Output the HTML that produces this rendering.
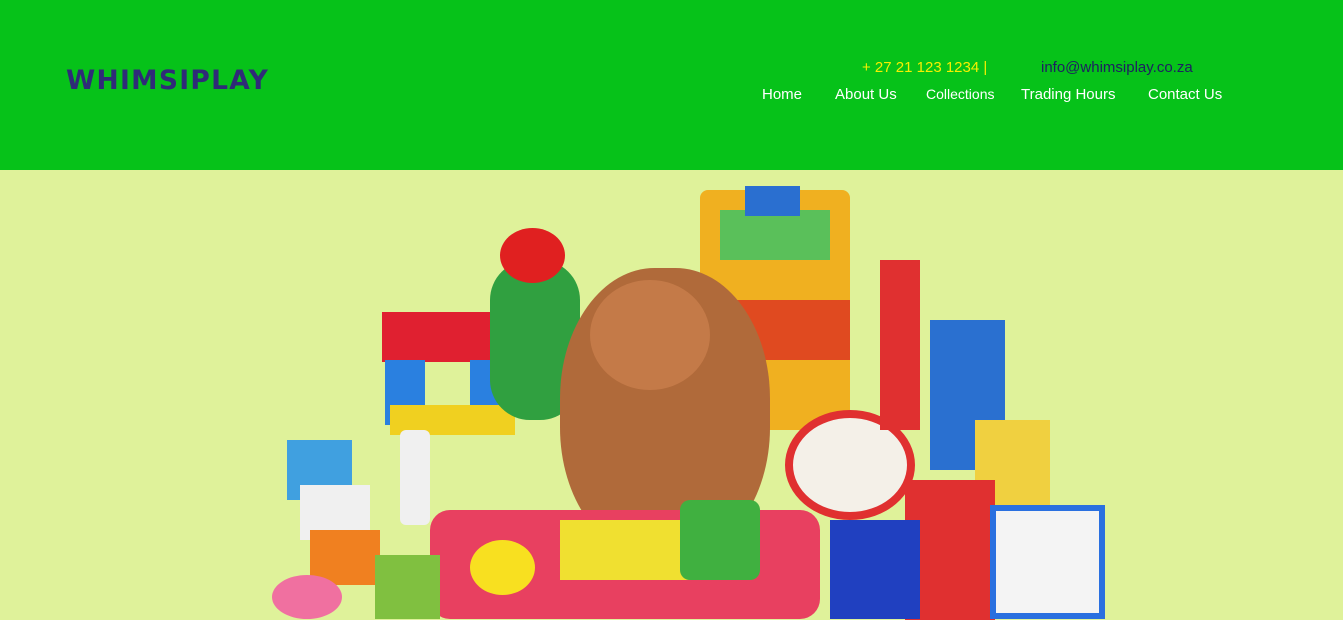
<!DOCTYPE html>
<html><head><style>
*{margin:0;padding:0;box-sizing:border-box}
body{width:1343px;height:619px;overflow:hidden;background:#dff29a;font-family:"Liberation Sans",sans-serif;position:relative}
header{position:absolute;left:0;top:0;width:1343px;height:170px;background:#06c219}
.logo{position:absolute;left:66px;top:65px;font-size:26.5px;font-weight:bold;color:#2f2b78;letter-spacing:1.3px;font-family:"DejaVu Sans",sans-serif}
.t{position:absolute;font-size:15px;white-space:nowrap}
.n{color:#fff;top:86px}
.b{position:absolute}
</style></head><body>
<header>
<div class="logo">WHIMSIPLAY</div>
<div class="t" style="left:862px;top:59px;color:#f6f000">+ 27 21 123 1234 |</div>
<div class="t" style="left:1041px;top:59px;color:#1d2160">info@whimsiplay.co.za</div>
<div class="t n" style="left:762px">Home</div>
<div class="t n" style="left:835px">About Us</div>
<div class="t n" style="left:926px;font-size:14px">Collections</div>
<div class="t n" style="left:1021px">Trading Hours</div>
<div class="t n" style="left:1148px">Contact Us</div>
</header>
<div class="b" style="left:700px;top:190px;width:150px;height:240px;background:#f0b020;border-radius:8px"></div>
<div class="b" style="left:720px;top:210px;width:110px;height:50px;background:#5ac05a"></div>
<div class="b" style="left:745px;top:186px;width:55px;height:30px;background:#2a6fd0"></div>
<div class="b" style="left:730px;top:300px;width:120px;height:60px;background:#e04a20"></div>
<div class="b" style="left:382px;top:312px;width:125px;height:50px;background:#e02030"></div>
<div class="b" style="left:385px;top:360px;width:40px;height:65px;background:#2a80e0"></div>
<div class="b" style="left:470px;top:360px;width:40px;height:60px;background:#2a80e0"></div>
<div class="b" style="left:390px;top:405px;width:125px;height:30px;background:#f0d020"></div>
<div class="b" style="left:400px;top:430px;width:30px;height:95px;background:#f0f0f0;border-radius:6px"></div>
<div class="b" style="left:490px;top:260px;width:90px;height:160px;background:#30a040;border-radius:40px"></div>
<div class="b" style="left:500px;top:228px;width:65px;height:55px;background:#e02020;border-radius:50%"></div>
<div class="b" style="left:560px;top:268px;width:210px;height:290px;background:#b06a3a;border-radius:45%"></div>
<div class="b" style="left:590px;top:280px;width:120px;height:110px;background:#c47a48;border-radius:50%"></div>
<div class="b" style="left:785px;top:410px;width:130px;height:110px;background:#f4f0e8;border-radius:50%;border:8px solid #e03030"></div>
<div class="b" style="left:930px;top:320px;width:75px;height:150px;background:#2a70d0"></div>
<div class="b" style="left:880px;top:260px;width:40px;height:170px;background:#e03030"></div>
<div class="b" style="left:975px;top:420px;width:75px;height:100px;background:#f0d040"></div>
<div class="b" style="left:905px;top:480px;width:90px;height:140px;background:#e03030"></div>
<div class="b" style="left:990px;top:505px;width:115px;height:114px;background:#f4f4f4;border:6px solid #2a70e0"></div>
<div class="b" style="left:287px;top:440px;width:65px;height:60px;background:#40a0e0"></div>
<div class="b" style="left:300px;top:485px;width:70px;height:55px;background:#f0f0f0"></div>
<div class="b" style="left:310px;top:530px;width:70px;height:55px;background:#f08020"></div>
<div class="b" style="left:430px;top:510px;width:390px;height:109px;background:#e84060;border-radius:20px"></div>
<div class="b" style="left:560px;top:520px;width:150px;height:60px;background:#f0e030"></div>
<div class="b" style="left:680px;top:500px;width:80px;height:80px;background:#40b040;border-radius:10px"></div>
<div class="b" style="left:830px;top:520px;width:90px;height:99px;background:#2040c0"></div>
<div class="b" style="left:272px;top:575px;width:70px;height:44px;background:#f070a0;border-radius:50%"></div>
<div class="b" style="left:375px;top:555px;width:65px;height:64px;background:#80c040"></div>
<div class="b" style="left:470px;top:540px;width:65px;height:55px;background:#f8e020;border-radius:50%"></div>
</body></html>
